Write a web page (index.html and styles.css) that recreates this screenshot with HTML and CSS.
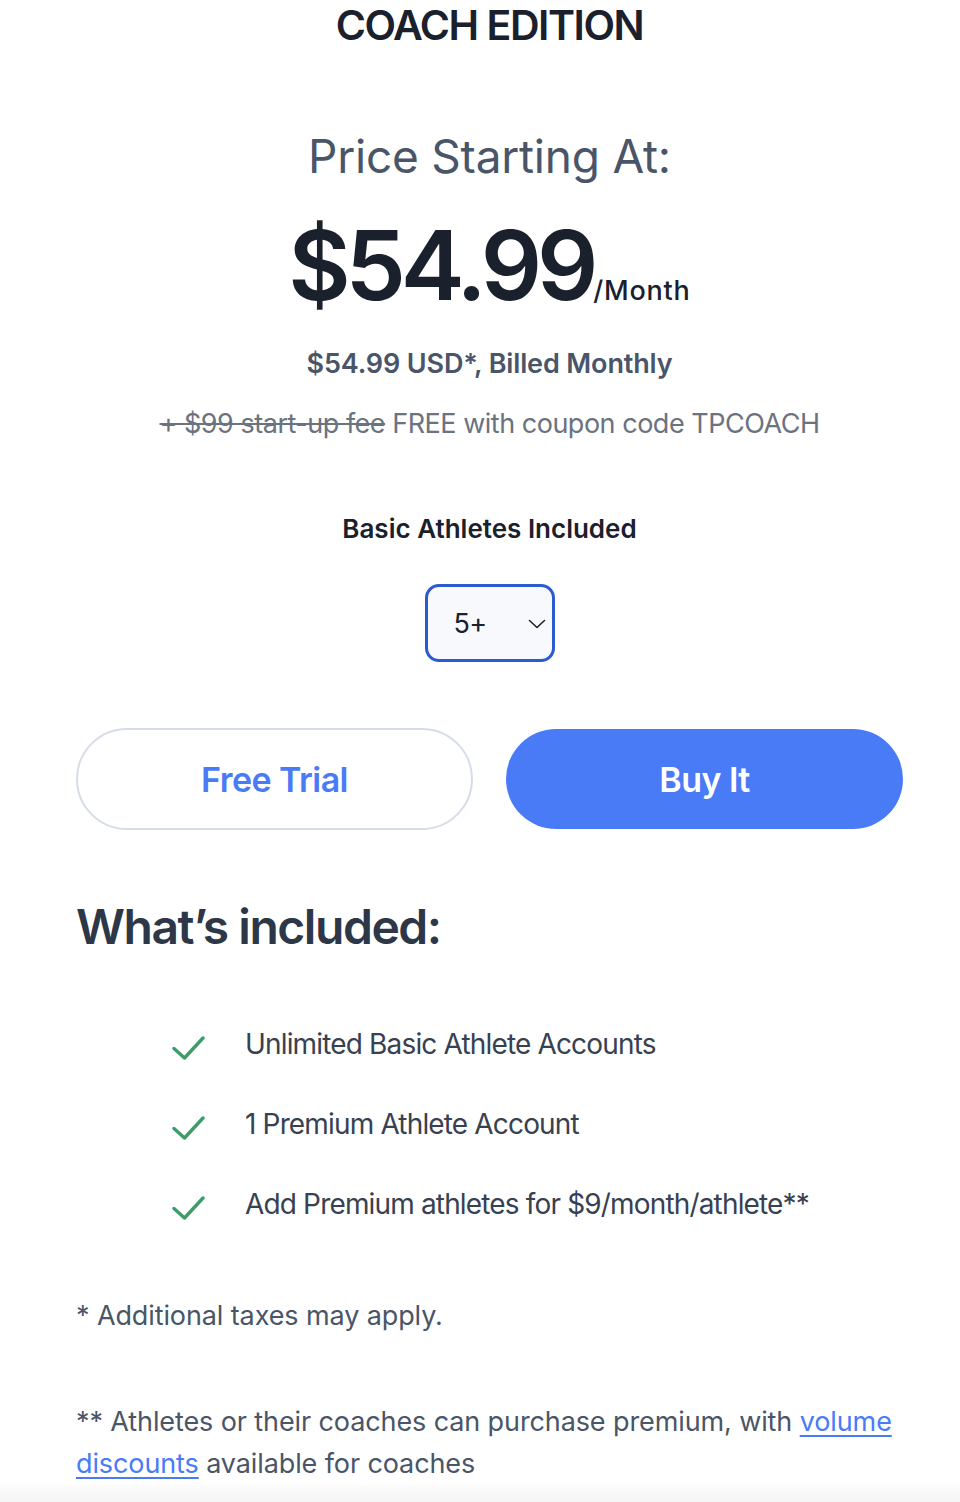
FILE: index.html
```html
<!DOCTYPE html>
<html lang="en">
<head>
<meta charset="utf-8">
<title>Coach Edition</title>
<link rel="stylesheet" href="styles.css">
</head>
<body>
<main class="page">
  <h1 class="edition">COACH EDITION</h1>
  <p class="starting">Price Starting At:</p>
  <div class="price"><span class="amount">$54.99</span><span class="per">/Month</span></div>
  <p class="billed">$54.99 USD*, Billed Monthly</p>
  <p class="fee"><s>+ $99 start-up fee</s> FREE with coupon code TPCOACH</p>
  <p class="athletes-label">Basic Athletes Included</p>
  <div class="select-wrap">
    <div class="select">
      <span class="select-value">5+</span>
      <svg class="chevron" width="18" height="10" viewBox="0 0 18 10"><path d="M1.5 1.5 L9 8.5 L16.5 1.5" fill="none" stroke="#222" stroke-width="1.6" stroke-linecap="round" stroke-linejoin="round"/></svg>
    </div>
  </div>
  <div class="actions">
    <a class="btn btn-outline">Free Trial</a>
    <a class="btn btn-solid">Buy It</a>
  </div>
  <h2 class="included">What’s included:</h2>
  <ul class="features">
    <li><svg class="check" width="33" height="24" viewBox="0 0 33 24"><path d="M2 12.5 L12.5 22 L31 2" fill="none" stroke="#3f9b6b" stroke-width="3.4" stroke-linecap="round" stroke-linejoin="round"/></svg><span>Unlimited Basic Athlete Accounts</span></li>
    <li><svg class="check" width="33" height="24" viewBox="0 0 33 24"><path d="M2 12.5 L12.5 22 L31 2" fill="none" stroke="#3f9b6b" stroke-width="3.4" stroke-linecap="round" stroke-linejoin="round"/></svg><span>1 Premium Athlete Account</span></li>
    <li><svg class="check" width="33" height="24" viewBox="0 0 33 24"><path d="M2 12.5 L12.5 22 L31 2" fill="none" stroke="#3f9b6b" stroke-width="3.4" stroke-linecap="round" stroke-linejoin="round"/></svg><span>Add Premium athletes for $9/month/athlete**</span></li>
  </ul>
  <p class="note">* Additional taxes may apply.</p>
  <p class="note note-2">** Athletes or their coaches can purchase premium, with <a href="#" class="link">volume discounts</a> available for coaches</p>
</main>
<div class="fade"></div>
</body>
</html>
```
FILE: styles.css
```css
html, body {
  margin: 0;
  padding: 0;
  background: #ffffff;
}
body {
  font-family: Inter, "Noto Sans", sans-serif;
  color: #1a202c;
}
.page {
  width: 827px;
  margin-left: 76px;
  display: flex;
  flex-direction: column;
}
.edition {
  margin: 0;
  text-align: center;
  font-size: 41px;
  line-height: 50px;
  font-weight: 600;
  letter-spacing: -0.035em;
  color: #1a202c;
}
.starting {
  margin: 78px 0 0;
  text-align: center;
  font-size: 46px;
  line-height: 56px;
  font-weight: 400;
  letter-spacing: -0.005em;
  color: #4a5568;
}
.price {
  margin-top: 31px;
  height: 100px;
  text-align: center;
  white-space: nowrap;
  line-height: 100px;
}
.amount {
  font-size: 96px;
  line-height: 100px;
  font-weight: 600;
  letter-spacing: -0.054em;
  color: #1a202c;
}
.per {
  font-size: 27px;
  font-weight: 500;
  letter-spacing: 0.03em;
  color: #1a202c;
}
.billed {
  margin: 32px 0 0;
  text-align: center;
  font-size: 27px;
  line-height: 34px;
  font-weight: 600;
  letter-spacing: -0.005em;
  color: #4a5568;
}
.fee {
  margin: 26px 0 0;
  text-align: center;
  font-size: 27px;
  line-height: 34px;
  font-weight: 400;
  letter-spacing: -0.018em;
  color: #6b7280;
}
.fee s {
  text-decoration-thickness: 2px;
}
.athletes-label {
  margin: 72px 0 0;
  text-align: center;
  font-size: 26px;
  line-height: 32px;
  font-weight: 600;
  letter-spacing: 0;
  color: #1a202c;
}
.select-wrap {
  margin-top: 39px;
  display: flex;
  justify-content: center;
}
.select {
  box-sizing: border-box;
  width: 130px;
  height: 78px;
  border: 3px solid #2a5bd0;
  border-radius: 14px;
  background: #f7f9fc;
  display: flex;
  align-items: center;
  justify-content: space-between;
  padding: 0 6px 0 26px;
}
.select-value {
  font-size: 27px;
  font-weight: 400;
  color: #1a202c;
  letter-spacing: -0.02em;
}
.chevron {
  display: block;
  margin-top: 2px;
}
.actions {
  margin-top: 66px;
  display: grid;
  grid-template-columns: 397px 397px;
  column-gap: 33px;
}
.btn {
  box-sizing: border-box;
  height: 102px;
  border-radius: 52px;
  display: flex;
  align-items: center;
  justify-content: center;
  font-size: 34px;
  font-weight: 600;
  letter-spacing: -0.016em;
  text-decoration: none;
}
.btn-outline {
  border: 2px solid #d6dce8;
  color: #4a7bf7;
  background: #ffffff;
}
.btn-solid {
  height: 100px;
  margin-top: 1px;
  background: #4a7bf7;
  color: #ffffff;
}
.included {
  margin: 69px 0 0;
  font-size: 48px;
  line-height: 56px;
  font-weight: 600;
  letter-spacing: -0.03em;
  color: #2d3748;
}
.features {
  list-style: none;
  margin: 72px 0 0;
  padding: 0 0 0 96px;
  display: flex;
  flex-direction: column;
  gap: 46px;
}
.features li {
  display: flex;
  align-items: center;
  gap: 40px;
  font-size: 28px;
  line-height: 34px;
  letter-spacing: -0.03em;
  color: #374151;
}
.check {
  flex: none;
  display: block;
  margin-top: 8px;
}
.note {
  margin: 74px 0 0;
  font-size: 27px;
  line-height: 42px;
  letter-spacing: -0.004em;
  color: #4a5568;
}
.note-2 {
  margin-top: 64px;
}
.link {
  color: #4a7bf7;
  text-decoration: underline;
  text-underline-offset: 4px;
  text-decoration-thickness: 2px;
}
.fade {
  position: fixed;
  left: 0;
  right: 0;
  bottom: 0;
  height: 22px;
  background: linear-gradient(to bottom, rgba(0,0,0,0), rgba(0,0,0,0.045));
  pointer-events: none;
}
```
